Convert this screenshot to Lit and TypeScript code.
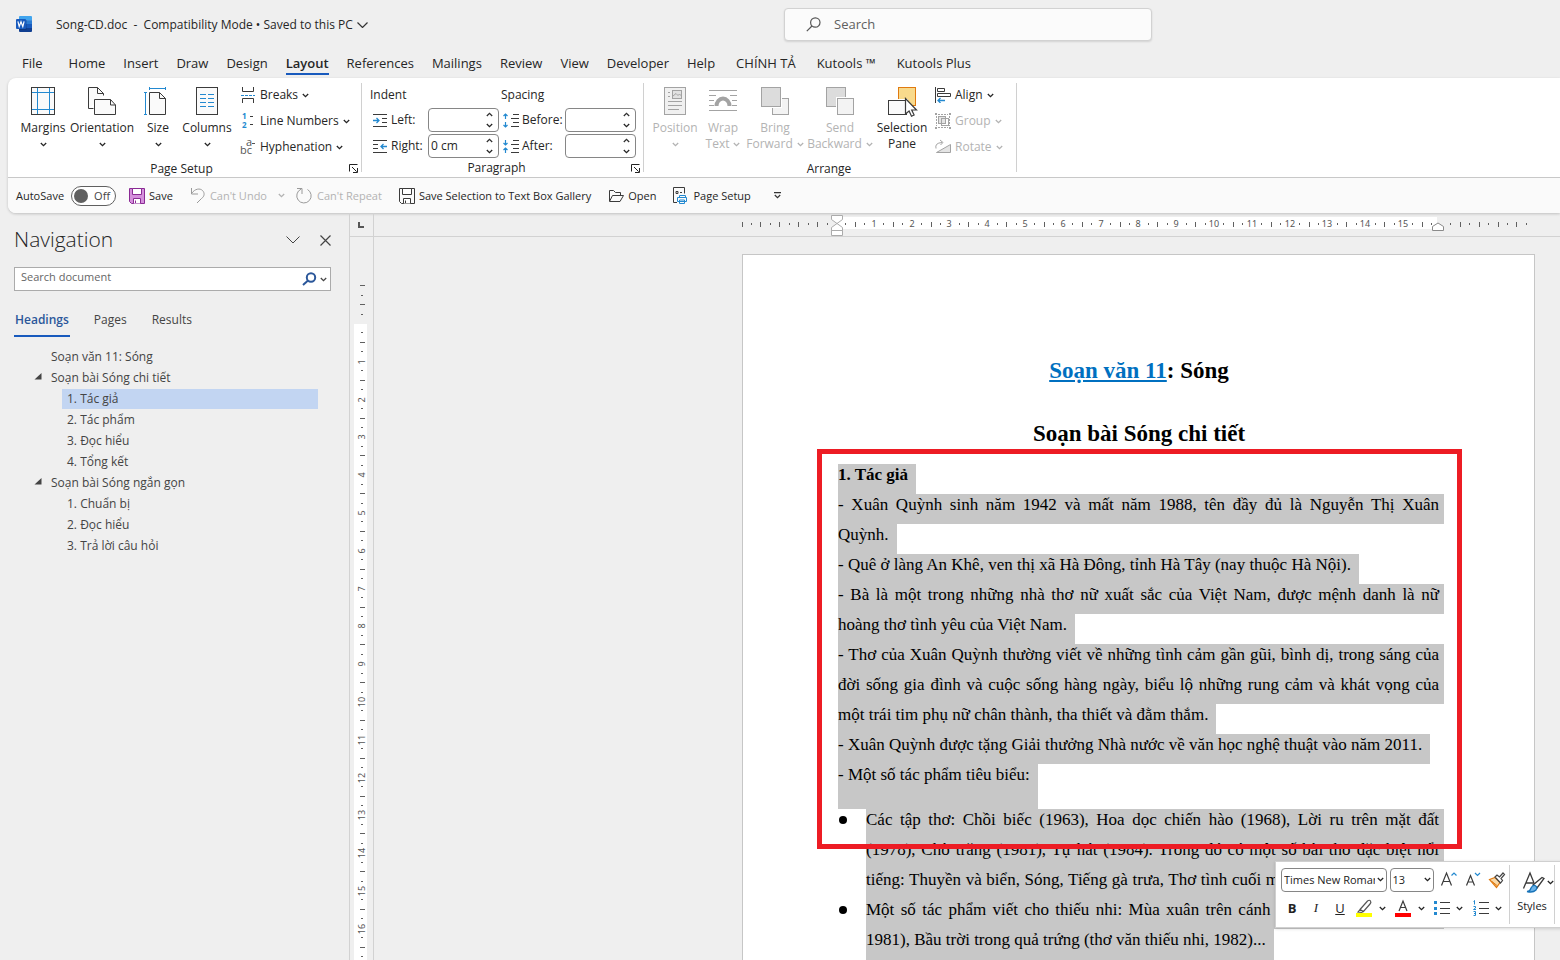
import { LitElement, html, svg, css, nothing } from "lit";
import { customElement, property } from "lit/decorators.js";
import { classMap } from "lit/directives/class-map.js";

const INK = "#3b3b3b";
const BLUE = "#2389d0";
const DIM = "#a3a3a3";

/* ---------- icon drawings ---------- */

const chevron = (cls = "") => html`<svg class="chev ${cls}" width="7" height="5" viewBox="0 0 7 5" fill="none" stroke="currentColor" stroke-width="1.3" aria-hidden="true"><path d="M.8 1l2.7 2.6L6.2 1" /></svg>`;
const chevronUp = html`<svg width="7" height="5" viewBox="0 0 7 5" fill="none" stroke="#333" stroke-width="1.3" aria-hidden="true"><path d="M.8 4l2.7-2.6L6.2 4" /></svg>`;

const launcher = html`<svg width="9" height="9" viewBox="0 0 9 9" fill="none" stroke="#222" aria-hidden="true"><path d="M.5 7.5V.5h8M3 3l4.6 4.6M8.500 4v4.500H4" /></svg>`;

const wordLogo = html`<svg width="16" height="16" viewBox="0 0 16 16" role="img" aria-label="Word">
  <path d="M3 1a1 1 0 0 1 1-1h11a1 1 0 0 1 1 1v3.500H3z" fill="#41a5ee" />
  <path d="M3 4.200h13V8H3z" fill="#2b7cd3" />
  <path d="M3 8h13v4H3z" fill="#185abd" />
  <path d="M3 12h13v3a1 1 0 0 1-1 1H4a1 1 0 0 1-1-1z" fill="#103f91" />
  <path d="M3 4h7.500v10H3z" fill="#0b2f6e" opacity=".5" />
  <rect x="0" y="3" width="10" height="10" rx="1" fill="#185abd" />
  <path d="M1.900 5.400l1.300 5.200L5 5.800l1.800 4.800 1.300-5.200" fill="none" stroke="#fff" stroke-width="1.200" />
</svg>`;

const page = (body: unknown, w = 32, h = 32) => html`<svg width=${w} height=${h} viewBox="0 0 ${w} ${h}" fill="none" stroke=${INK} aria-hidden="true">${body}</svg>`;

const bigIcons: Record<string, unknown> = {
  margins: page(svg`<rect x="4.500" y="2.500" width="23" height="27" fill="#fafafa"/><path stroke=${BLUE} d="M10.500 3v26M22.500 3v26M5 7.500h22M5 24.500h22"/>`),
  orientation: page(svg`<path fill="#fafafa" d="M2.500 23.500v-21h9l6 6v2"/><path d="M11.500 2.500v6h6M2.500 23.500h5"/><path fill="#fafafa" d="M8.500 14.500h16l5 5.500v9.500h-21z"/><path d="M24.500 14.500V20h5"/>`),
  size: page(svg`<path fill="#fafafa" d="M7.500 7.500h10l6 6v16h-16z"/><path d="M17.500 7.500v6h6"/><path stroke=${BLUE} d="M7.500 3.500h16M7.500 2v3M23.500 2v3M3.500 7.500v22M2 7.500h3M2 29.500h3"/>`),
  columns: page(svg`<rect x="5.500" y="2.500" width="21" height="27" fill="#fafafa"/><path stroke=${BLUE} d="M9 9.500h6M17 9.500h6M9 13.500h6M17 13.500h6M9 17.500h6M17 17.500h6M9 21.500h6M17 21.500h6"/>`),
  position: page(svg`<g stroke=${DIM}><rect x="5.500" y="2.500" width="21" height="27" fill="#f0f0f0"/><rect x="13.500" y="5.500" width="9" height="8" fill="#e2e2e2"/><path d="M14 11l3-2.500 2 2 1.500-1.500 2 2M9 7.500h2M9 11.500h2M9 16.500h14M9 20.500h14M9 24.500h11"/></g>`),
  wrap: page(svg`<g stroke=${DIM}><path d="M2 5.500h28M2 10.500h7M23 10.500h7M2 15.500h5M25 15.500h5M2 20.500h5M25 20.500h5M2 25.500h28"/><path stroke-width="4" d="M9.500 21a6.500 7.500 0 0 1 13 0"/></g>`),
  forward: page(svg`<g stroke=${DIM}><rect x="13.500" y="13.500" width="16" height="16" fill="#f3f3f3"/><rect x="2.500" y="2.500" width="20" height="20" fill="#fff" stroke="#fff"/><rect x="2.500" y="2.500" width="19" height="19" fill="#dcdcdc" /></g>`),
  backward: page(svg`<g stroke=${DIM}><rect x="2.500" y="2.500" width="19" height="19" fill="#dcdcdc"/><rect x="12.500" y="12.500" width="18" height="18" fill="#f3f3f3" stroke="#fff"/><rect x="13.500" y="13.500" width="16" height="16" fill="#f3f3f3"/></g>`),
  selection: page(svg`<rect x="12.500" y="2.500" width="17" height="18" fill="#f8da8c" stroke="#e07a10"/><rect x="1.500" y="14.500" width="20" height="16" fill="#fff" stroke="#fff"/><rect x="2.500" y="15.500" width="18" height="14" fill="#fafafa"/><path fill="#fff" stroke-width="1.200" d="M19.500 13.500V29l3.600-3 2.400 5.200 2.600-1.200-2.400-5h4.800z"/>`),
};

const smallIcons: Record<string, unknown> = {
  breaks: page(svg`<path d="M2.500 0v4.500h11V0M2.500 16v-4.500h11V16"/><path stroke=${BLUE} stroke-dasharray="3 1" d="M1 8.500h14"/>`, 16, 16),
  lines: html`<svg class="letters" width="16" height="16" viewBox="0 0 16 16" stroke=${INK} aria-hidden="true"><path d="M10 3.500h3M10 11.500h3"/><g fill=${BLUE} stroke="none" font-size="8" font-weight="700"><text x="2" y="6">1</text><text x="2" y="15">2</text></g></svg>`,
  hyphen: html`<svg class="letters" width="16" height="16" viewBox="0 0 16 16" fill="#555" aria-hidden="true"><g font-size="11"><text x="6" y="7">a</text><text x="0" y="15">bc</text></g><path stroke="#555" d="M12 4.500h3"/></svg>`,
  left: page(svg`<path d="M1 2.500h14M10 6.500h5M10 10.500h5M1 14.500h14"/><path stroke=${BLUE} stroke-width="1.300" d="M1 8.500h6M4.500 6l2.500 2.500L4.500 11"/>`, 16, 16),
  right: page(svg`<path d="M1 2.500h14M1 6.500h5M1 10.500h5M1 14.500h14"/><path stroke=${BLUE} stroke-width="1.300" d="M9 8.500h6M11.500 6L9 8.500l2.500 2.500"/>`, 16, 16),
  before: page(svg`<path d="M10 2.500h6M8 6.500h8M10 10.500h6M8 14.500h8"/><path stroke=${BLUE} stroke-width="1.200" d="M2.500 7V2M.5 4l2-2 2 2M2.500 10v5M.5 13l2 2 2-2"/>`, 16, 16),
  after: page(svg`<path d="M10 2.500h6M8 6.500h8M10 10.500h6M8 14.500h8"/><path stroke=${BLUE} stroke-width="1.200" d="M2.500 2v5M.5 5l2 2 2-2M2.500 15v-5M.5 12l2-2 2 2"/>`, 16, 16),
  align: page(svg`<path d="M.5 0v16M2.500 1.500h7v3h-7zM2.500 6.500h13v3h-13z"/><path stroke=${BLUE} stroke-width="1.300" d="M3 13.500h7M5.500 11L3 13.500 5.500 16"/>`, 16, 16),
  group: page(svg`<g stroke=${DIM}><path d="M3 1.500h10M3 14.500h10M1.500 3v10M14.500 3v10" stroke-dasharray="2 1"/><rect x="3.500" y="3.500" width="7" height="7" fill="#e4e4e4"/><rect x="6.500" y="5.500" width="7" height="7"/><path fill=${DIM} stroke="none" d="M0 0h2v2H0zM14 0h2v2h-2zM0 14h2v2H0zM14 14h2v2h-2z"/></g>`, 16, 16),
  rotate: page(svg`<g stroke=${DIM}><path fill="#e4e4e4" d="M1.500 13.500h14v-8z"/><path d="M1 9.500Q-.5 4 7 3.500M5 1l3 2.500L5.500 6"/></g>`, 16, 16),
  undo: page(svg`<path stroke="#9a9a9a" d="M1.500 1v6H8M1.500 6.500C5 1.500 10 1 12.500 3.500s2 6-1 8L7 16"/>`, 16, 17),
  repeat: page(svg`<path stroke="#9a9a9a" d="M5 2.200a7.200 7.200 0 1 0 6.500.3M1 1.500h5V7"/>`, 17, 17),
  open: page(svg`<path d="M1.500 13V2.500h4l2 2h5v3M1.500 13.500l3-6h11l-3.500 6z"/>`, 16, 16),
  pagesetup: page(svg`<path d="M4 15.500H.5V.5h11v6M3 4.500h2v2H3zM7 5.500h2"/><path stroke=${BLUE} fill="#fafafa" d="M6.500 8.500h6v2h-6zM4.500 10.500h9v4h-9zM6.500 13h5v3.500h-5z"/>`, 16, 18),
};

const disk = (line: string, fill: string) => page(svg`<g stroke=${line}><path fill=${fill} d="M.5.5h15v15h-13l-2-2z"/><path fill="#fff" d="M3.500.5h9v6h-9zM4.500 15.500v-5h7v5"/><path d="M6.500 15v-2.500"/></g>`, 16, 16);

/* ---------- rulers ---------- */

const CM = 37.8;
const TICK = "#606060";

function hRuler() {
  const zero = 94;
  const out = [];
  for (let q = -10; q <= 73; q++) {
    if (q === 0 || q === 64) continue;
    const x = Math.round(zero + (q * CM) / 4);
    if (q > 0 && q < 64 && q % 4 === 0) out.push(svg`<text x=${x} y="14" text-anchor="middle">${q / 4}</text>`);
    else if (q % 2 === 0) out.push(svg`<rect x=${x} y="9" width="1" height="5" fill=${TICK}/>`);
    else out.push(svg`<rect x=${x} y="10" width="1" height="2" fill=${TICK}/>`);
  }
  return html`<svg class="ruler" width="793" height="23" viewBox="0 0 793 23" role="img" aria-label="Horizontal ruler">
    <rect x="95" y="4" width="600" height="12" fill="#fff" />${out}
    <g fill="#fff" stroke="#ababab"><path d="M89.500 2.500h11v4l-5.500 4-5.500-4zM89.500 17.500v-3l5.500-4 5.500 4v3zM89.500 17.500h11v5h-11z"/></g>
    <path d="M690.500 17.500v-4l5.500-3.500 5.500 3.500v4z" fill="#fff" stroke="#8a8a8a"/>
  </svg>`;
}

function vRuler() {
  const zero = 87;
  const out = [];
  for (let q = -4; q <= 67; q++) {
    if (q === 0) continue;
    const y = Math.round(zero + (q * CM) / 4);
    if (q > 0 && q % 4 === 0) out.push(svg`<text transform="translate(15 ${y}) rotate(-90)" text-anchor="middle">${q / 4}</text>`);
    else if (q % 2 === 0) out.push(svg`<rect x="10" y=${y - 1} width="5" height="1" fill=${TICK}/>`);
    else out.push(svg`<rect x="11" y=${y - 1} width="2" height="1" fill=${TICK}/>`);
  }
  return html`<svg class="ruler" width="23" height="740" viewBox="0 0 23 740" role="img" aria-label="Vertical ruler">
    <rect x="4" y="87" width="13" height="660" fill="#fff" />${out}</svg>`;
}

/* ---------- shared styles ---------- */

const base = css`
  * { box-sizing: border-box; }
  button, input, select { font: inherit; color: inherit; margin: 0; }
  button { display: inline-flex; align-items: center; background: none; border: 0; padding: 0; text-align: left; white-space: nowrap; }
  button:disabled { color: #b3b3b3; }
  svg { display: block; flex: none; }
  input { outline: none; min-width: 0; }
`;

@customElement("ribbon-button")
export class RibbonButton extends LitElement {
  @property() icon = "";
  @property() label = "";
  @property() second = "";
  @property({ type: Boolean }) disabled = false;
  @property({ type: Boolean }) plain = false;

  static styles = [base, css`
    :host { display: block; flex: none; }
    button { display: flex; flex-direction: column; width: 100%; padding-top: 7px; line-height: 16px; text-align: center; }
    .label { margin-top: 3px; }
    .more { display: flex; align-items: center; justify-content: center; gap: 4px; height: 16px; }
  `];

  render() {
    return html`<button type="button" ?disabled=${this.disabled}>
      ${bigIcons[this.icon]}
      <span class="label">${this.label}</span>
      <span class="more">${this.second ? html`<span>${this.second}</span>` : nothing}${this.plain ? nothing : chevron()}</span>
    </button>`;
  }
}

@customElement("small-button")
export class SmallButton extends LitElement {
  @property() icon = "";
  @property() label = "";
  @property({ type: Boolean }) disabled = false;

  static styles = [base, css`
    :host { display: block; }
    button { display: flex; height: 26px; gap: 4px; }
    .letters { overflow: visible; }
  `];

  render() {
    return html`<button type="button" ?disabled=${this.disabled}>${smallIcons[this.icon]}<span>${this.label}</span>${chevron()}</button>`;
  }
}

@customElement("spin-field")
export class SpinField extends LitElement {
  @property() icon = "";
  @property() label = "";
  @property() value = "";

  static styles = [base, css`
    :host { display: block; }
    .row { display: flex; align-items: center; height: 26px; }
    label { display: flex; align-items: center; gap: 3px; flex: 1; white-space: nowrap; }
    .box { display: flex; flex: none; width: 71px; height: 24px; border: 1px solid #868686; border-radius: 4px; background: #fff; }
    input { flex: 1; border: 0; padding: 0 2px; background: none; }
    .spin { display: flex; flex-direction: column; justify-content: space-around; padding-right: 5px; }
    .spin button { height: 10px; }
  `];

  render() {
    return html`<div class="row">
      <label for="f">${smallIcons[this.icon]}<span>${this.label}</span></label>
      <span class="box"><input id="f" type="text" .value=${this.value} />
        <span class="spin"><button type="button" aria-label="Increase">${chevronUp}</button><button type="button" aria-label="Decrease">${chevron()}</button></span></span>
    </div>`;
  }
}

@customElement("nav-pane")
export class NavPane extends LitElement {
  private items = [
    { t: "Soạn văn 11: Sóng", level: 1 },
    { t: "Soạn bài Sóng chi tiết", level: 1, open: true },
    { t: "1. Tác giả", level: 2, on: true },
    { t: "2. Tác phẩm", level: 2 },
    { t: "3. Đọc hiểu", level: 2 },
    { t: "4. Tổng kết", level: 2 },
    { t: "Soạn bài Sóng ngắn gọn", level: 1, open: true },
    { t: "1. Chuẩn bị", level: 2 },
    { t: "2. Đọc hiểu", level: 2 },
    { t: "3. Trả lời câu hỏi", level: 2 },
  ];

  static styles = [base, css`
    :host { display: block; padding: 10px 18px 0 14px; color: #444; }
    .head { display: flex; align-items: center; height: 32px; color: #333; }
    h2 { flex: 1; margin: 0; font-size: 21px; font-weight: 300; line-height: 32px; color: #262626; }
    .head button { padding-top: 2px; }
    .head button + button { margin-left: 20px; }
    .search { display: flex; align-items: center; height: 24px; margin-top: 12px; border: 1px solid #ababab; background: #fff; }
    .search input { flex: 1; border: 0; padding: 0 6px 4px; font-size: 11px; background: none; }
    .search input::placeholder { color: #666; opacity: 1; }
    .search button { gap: 3px; padding-right: 3px; }
    .tabs { display: flex; gap: 23px; margin-top: 20px; }
    .tabs button { height: 26px; padding: 0 1px 6px; border-bottom: 2px solid transparent; }
    .tabs .on { font-weight: 600; color: #2b579a; border-color: #185abd; }
    ul { list-style: none; margin: 9px 13px 0 20px; padding: 0; }
    li { display: flex; align-items: center; height: 21px; }
    .mark { width: 17px; height: 10px; }
    a { flex: 1; color: inherit; text-decoration: none; line-height: 20px; }
    .sub a { margin-left: 11px; padding-left: 5px; }
    .on a { background: #c2d5f2; }
  `];

  render() {
    return html`
      <div class="head"><h2>Navigation</h2>
        <button type="button" aria-label="Options"><svg width="14" height="8" viewBox="0 0 14 8" fill="none" stroke="#444"><path d="M.5.5L7 7 13.500.5"/></svg></button>
        <button type="button" aria-label="Close"><svg width="11" height="11" viewBox="0 0 11 11" fill="none" stroke="#444" stroke-width="1.200"><path d="M.5.500l10 10M10.500.500l-10 10"/></svg></button>
      </div>
      <div class="search"><input type="text" aria-label="Search document" placeholder="Search document" />
        <button type="button" aria-label="Search"><svg width="15" height="14" viewBox="0 0 15 14" fill="none" stroke="#2b579a" stroke-width="2"><circle cx="9" cy="5.500" r="4.200"/><path d="M6 8.500L1 13"/></svg>${chevron()}</button>
      </div>
      <div class="tabs"><button type="button" class="on">Headings</button><button type="button">Pages</button><button type="button">Results</button></div>
      <ul>${this.items.map((i) => html`<li class=${classMap({ sub: i.level === 2, on: !!i.on })}>
        <span class="mark">${i.open ? html`<svg width="8" height="8" viewBox="0 0 8 8"><path d="M7.500 0v6.500H.5z" fill="#444"/></svg>` : nothing}</span><a href="#">${i.t}</a></li>`)}</ul>`;
  }
}

@customElement("mini-toolbar")
export class MiniToolbar extends LitElement {
  static styles = [base, css`
    :host { display: flex; height: 67px; padding: 5px 0 0 5px; background: #fff; border: 1px solid #d0d0d0; box-shadow: 0 1px 3px rgba(0,0,0,.15); font-size: 12px; color: #222; overflow: hidden; }
    .rows { display: flex; flex-direction: column; width: 228px; }
    .row { display: flex; align-items: center; height: 25px; }
    .row + .row { height: 32px; }
    .pick { display: grid; align-items: center; height: 24px; border: 1px solid #868686; border-radius: 4px; margin-right: 3px; }
    .pick > * { grid-area: 1 / 1; }
    .pick svg { justify-self: end; margin-right: 2px; pointer-events: none; }
    select { appearance: none; width: calc(100% - 11px); border: 0; padding: 0 0 0 2px; background: none; font-size: 11px; overflow: hidden; white-space: nowrap; }
    .face { width: 106px; }
    .size { width: 45px; }
    .row button { width: 24px; justify-content: center; }
    .row .wide { gap: 6px; width: 39px; justify-content: flex-start; padding-left: 3px; }
    .row .fmt { width: 24px; font-size: 13px; padding-right: 2px; }
    .b { font-weight: 700; }
    .i { font-style: italic; font-family: "Liberation Serif", serif; }
    .u { text-decoration: underline; }
    .styles { display: flex; flex-direction: column; align-items: center; width: 46px; border-left: 1px solid #d0d0d0; border-right: 1px solid #d0d0d0; margin: -2px 0 3px; padding-top: 5px; }
    .styles button { flex-direction: column; align-items: flex-end; gap: 4px; font-size: 11px; line-height: 16px; }
    .glyph { display: flex; align-items: center; gap: 1px; margin-right: -7px; }
  `];

  render() {
    return html`<div class="rows">
      <div class="row">
        <span class="pick face"><select aria-label="Font"><option>Times New Roman</option></select>${chevron()}</span>
        <span class="pick size"><select aria-label="Font size"><option>13</option></select>${chevron()}</span>
        <button type="button" aria-label="Grow font"><svg width="18" height="18" viewBox="0 0 18 18" fill="none" stroke=${INK} stroke-width="1.200"><path d="M1.500 14.500L6.500 2l5 12.500M3.300 10.500h6.400"/><path stroke=${BLUE} d="M11.500 4.500L14 2l2.500 2.500"/></svg></button>
        <button type="button" aria-label="Shrink font"><svg width="18" height="18" viewBox="0 0 18 18" fill="none" stroke=${INK} stroke-width="1.200"><path d="M2.500 14.500l4-10 4 10M4 11h5"/><path stroke=${BLUE} d="M11 2L13.500 4.500 16 2"/></svg></button>
        <button type="button" aria-label="Format painter"><svg width="18" height="18" viewBox="0 0 18 18" fill="none"><path d="M1.500 8.500L7 6.500l5 5-3.500 5z" fill="#f9d9a8" stroke="#e07a10" stroke-width="1.200"/><path d="M4 10.500l5 4" stroke="#e07a10"/><path d="M7 6l2-2 2.500 2L15 2l1.500 1.500L13 7.500l1.500 2-2 2.500z" fill="#fff" stroke="#444" stroke-width="1.200"/></svg></button>
      </div>
      <div class="row">
        <button type="button" class="fmt b">B</button><button type="button" class="fmt i">I</button><button type="button" class="fmt u">U</button>
        <button type="button" class="wide" aria-label="Highlight"><svg width="17" height="18" viewBox="0 0 17 18" fill="none" stroke="#555" stroke-width="1.200"><path d="M4 10.500L11.500 2q2-1.500 3 0t-.5 3L7.500 12.500zM4 10.500L2 13l3.500.5 2-1"/><path fill="#ff0" stroke="none" d="M0 14h16v4H0z"/></svg>${chevron()}</button>
        <button type="button" class="wide" aria-label="Font color"><svg width="17" height="18" viewBox="0 0 17 18" fill="none" stroke=${INK} stroke-width="1.200"><path d="M4 12L8 2l4 10M5.500 8.500h5"/><path fill="#f00" stroke="none" d="M0 14h16v4H0z"/></svg>${chevron()}</button>
        <button type="button" class="wide" aria-label="Bullets"><svg width="16" height="16" viewBox="0 0 16 16" stroke=${INK}><path d="M6 2.500h10M6 8.500h10M6 13.500h10"/><path fill=${BLUE} stroke="none" d="M0 1h3v3H0zM0 7h3v3H0zM0 12h3v3H0z"/></svg>${chevron()}</button>
        <button type="button" class="wide" aria-label="Numbering"><svg width="16" height="16" viewBox="0 0 16 16" stroke=${INK} fill="none"><path d="M6 2.500h10M6 8.500h10M6 13.500h10"/><path stroke=${BLUE} d="M.5 1.500l1-1v4M.5 6.500h2v1.500l-2 1.500h2.500M.5 11.500h2v4h-2M1 13.500h1.500"/></svg>${chevron()}</button>
      </div></div>
      <div class="styles"><button type="button"><span class="glyph"><svg width="24" height="24" viewBox="0 0 24 24" fill="none" stroke=${INK} stroke-width="1.300"><path d="M1.500 18.500L8 3l4 10M4 13h8"/><path fill="#fff" d="M11 15L20 7.500l2 1-7 9.500z"/><path fill="#6cb4ea" stroke="#1873b8" d="M5 21.500q3 0 4-3.500 1.500-3 4-2.500 3 1.500 1 4.500-3 3-9 1.500z"/></svg>${chevron()}</span><span>Styles</span></button></div>`;
  }
}

@customElement("app-root")
export class AppRoot extends LitElement {
  private tabs = ["File", "Home", "Insert", "Draw", "Design", "Layout", "References", "Mailings", "Review", "View", "Developer", "Help"];
  private addins = ["CHÍNH TẢ", "Kutools ™", "Kutools Plus"];

  /* kind: f = justified full line, s = short last line */
  private lines: [string, string][] = [
    ["s bold", "1. Tác giả"],
    ["f", "- Xuân Quỳnh sinh năm 1942 và mất năm 1988, tên đầy đủ là Nguyễn Thị Xuân"],
    ["s", "Quỳnh."],
    ["s", "- Quê ở làng An Khê, ven thị xã Hà Đông, tỉnh Hà Tây (nay thuộc Hà Nội)."],
    ["f", "- Bà là một trong những nhà thơ nữ xuất sắc của Việt Nam, được mệnh danh là nữ"],
    ["s", "hoàng thơ tình yêu của Việt Nam."],
    ["f", "- Thơ của Xuân Quỳnh thường viết về những tình cảm gần gũi, bình dị, trong sáng của"],
    ["f", "đời sống gia đình và cuộc sống hàng ngày, biểu lộ những rung cảm và khát vọng của"],
    ["s", "một trái tim phụ nữ chân thành, tha thiết và đằm thắm."],
    ["s", "- Xuân Quỳnh được tặng Giải thưởng Nhà nước về văn học nghệ thuật vào năm 2011."],
    ["s end", "- Một số tác phẩm tiêu biểu:"],
  ];
  private bullets: [string, string][][] = [
    [
      ["f", "Các tập thơ: Chồi biếc (1963), Hoa dọc chiến hào (1968), Lời ru trên mặt đất"],
      ["f", "(1978), Chờ trăng (1981), Tự hát (1984). Trong đó có một số bài thơ đặc biệt nổi"],
      ["f", "tiếng: Thuyền và biển, Sóng, Tiếng gà trưa, Thơ tình cuối mùa thu, Thơ vui về phái"],
    ],
    [
      ["f", "Một số tác phẩm viết cho thiếu nhi: Mùa xuân trên cánh đồng (truyện thiếu nhi,"],
      ["s end", "1981), Bầu trời trong quả trứng (thơ văn thiếu nhi, 1982)..."],
    ],
  ];

  static styles = [base, css`
    :host { display: flex; flex-direction: column; height: 100vh; overflow: hidden; background: #efefef; color: #262626; font-family: "Open Sans", "Noto Sans", sans-serif; font-size: 12px; line-height: 16px; }
    .title { display: grid; grid-template-columns: minmax(0, 784fr) 368px minmax(0, 408fr); align-items: center; height: 48px; flex: none; }
    .doc { display: flex; align-items: center; padding-left: 16px; }
    .doc button { margin-left: 24px; padding-top: 2px; gap: 4px; white-space: pre; }
    .find { display: flex; align-items: center; height: 33px; padding-left: 21px; gap: 13px; background: #fbfbfb; border: 1px solid #d2d2d2; border-radius: 4px; box-shadow: 0 1px 2px rgba(0,0,0,.12); font-size: 13px; }
    .find input { flex: 1; border: 0; padding: 0; background: none; }
    .find input::placeholder { color: #606060; opacity: 1; }
    .tabs { display: flex; height: 30px; flex: none; padding-left: 13px; font-size: 13px; }
    .tabs button { height: 27px; margin: 0 9px; padding-top: 5px; border-bottom: 2px solid transparent; }
    .tabs button:first-child { margin-right: 17px; }
    .tabs .addin { margin-left: 12px; }
    .tabs .on { font-weight: 600; border-color: #185abd; }
    .ribbon { flex: none; margin-left: 8px; border-radius: 8px 0 0 8px; background: #fff; box-shadow: 0 1px 3px rgba(0,0,0,.2); overflow: hidden; }
    .groups { display: flex; height: 100px; border-bottom: 1px solid #c8c8c8; }
    .group { display: flex; flex-direction: column; position: relative; }
    .group::after { content: ""; position: absolute; right: 0; top: 5px; bottom: 5px; width: 1px; background: #d0d0d0; }
    .tools { display: flex; flex: 1; }
    .caption { display: flex; align-items: center; height: 18px; padding-right: 3px; }
    .caption span { flex: 1; text-align: center; }
    .setup { width: 354px; padding-left: 6px; }
    .setup .caption { padding-right: 4px; }
    .para { width: 282px; }
    .para .caption { padding-right: 4px; }
    .arrange { width: 373px; }
    .stack { display: flex; flex-direction: column; padding: 4px 0 0 1px; }
    .setup .stack { padding-left: 10px; }
    .w34 { width: 34px; } .w46 { width: 46px; } .w52 { width: 52px; } .w58 { width: 58px; }
    .w60 { width: 60px; } .w62 { width: 62px; } .w64 { width: 64px; } .w70 { width: 70px; }
    .indent, .spacing { width: 135px; margin-left: 2px; padding-top: 4px; }
    .indent spin-field { padding-left: 8px; }
    .spacing spin-field { padding-left: 2px; }
    .field-head { height: 25px; line-height: 26px; }
    .indent .field-head { padding-left: 6px; }
    .qat { display: flex; align-items: center; gap: 17px; height: 35px; padding-left: 8px; background: #fafafa; font-size: 11px; }
    .qat button { gap: 4px; }
    .auto { display: flex; align-items: center; gap: 7px; margin-right: -4px; }
    .history { display: flex; align-items: center; gap: 11px; margin-right: -6px; }
    .qat .more { margin-left: 6px; }
    .switch { display: grid; align-items: center; width: 45px; height: 20px; border: 1px solid #606060; border-radius: 10px; background: #fff; }
    .switch > * { grid-area: 1 / 1; }
    .switch input { appearance: none; width: 14px; height: 14px; margin-left: 2px; border-radius: 50%; background: #606060; }
    .switch span { justify-self: end; padding-right: 5px; color: #444; }
    .main { display: grid; grid-template-columns: 349px 25px minmax(0, 1fr); flex: 1; min-height: 0; }
    .vert { display: flex; flex-direction: column; border: 1px solid #d2d2d2; border-width: 0 1px; overflow: hidden; }
    .corner { height: 24px; flex: none; padding: 9px 0 0 8px; border-bottom: 1px solid #d2d2d2; }
    .ruler text { font-size: 9px; fill: #555; font-family: "Noto Sans", sans-serif; }
    .work { position: relative; display: flex; flex-direction: column; min-width: 0; min-height: 0; overflow: hidden; }
    .horiz { display: flex; justify-content: flex-end; height: 24px; flex: none; padding-right: 25px; border-bottom: 1px solid #d2d2d2; }
    .canvas { display: flex; justify-content: flex-end; flex: 1; min-height: 0; padding: 17px 25px 0 0; }
    .sheet { position: relative; width: 793px; height: 1122px; padding: 99px 90px 0 95px; border: 1px solid #c6c6c6; background: #fff; color: #000; font: 17px/21px "Liberation Serif", serif; }
    h1 { margin: 0 4px 29px 0; font-size: 23px; line-height: 34px; font-weight: 700; text-align: center; }
    h1.second { margin-bottom: 13px; }
    h1 a { color: #0070c0; }
    .line { height: 30px; width: fit-content; padding-right: 8px; background: #c7c7c7; white-space: nowrap; }
    .line.f { width: 100%; padding-right: 5px; text-align: justify; text-align-last: justify; }
    .line.end { height: 45px; }
    .bold { font-weight: 700; }
    ul { list-style: none; margin: 0; padding: 0; }
    li { display: grid; grid-template-columns: 28px minmax(0, 1fr); }
    li::before { content: ""; width: 8px; height: 8px; margin: 7px 0 0 1px; border-radius: 50%; background: #000; }
    .frame { position: absolute; left: 74px; top: 194px; width: 645px; height: 400px; border: 5px solid #ed1c24; }
    mini-toolbar { position: absolute; right: -4px; top: 648px; width: 289px; }
  `];

  render() {
    return html`
      <header class="title">
        <div class="doc">${wordLogo}<button type="button"><span>Song-CD.doc  -  Compatibility Mode • Saved to this PC</span><svg width="11" height="6" viewBox="0 0 11 6" fill="none" stroke="#333" stroke-width="1.200"><path d="M.5.500l5 5 5-5"/></svg></button></div>
        <label class="find"><svg width="15" height="15" viewBox="0 0 15 15" fill="none" stroke="#555" stroke-width="1.200"><circle cx="9.300" cy="5.500" r="4.700"/><path d="M6 9L.8 14.200"/></svg><input type="search" aria-label="Search" placeholder="Search" /></label>
      </header>
      <nav class="tabs">${this.tabs.map((t) => html`<button type="button" class=${t === "Layout" ? "on" : ""}>${t}</button>`)}${this.addins.map((t) => html`<button type="button" class="addin">${t}</button>`)}</nav>
      <section class="ribbon">
        <div class="groups">
          <div class="group setup">
            <div class="tools">
              <ribbon-button class="w58" icon="margins" label="Margins"></ribbon-button>
              <ribbon-button class="w60" icon="orientation" label="Orientation"></ribbon-button>
              <ribbon-button class="w52" icon="size" label="Size"></ribbon-button>
              <ribbon-button class="w46" icon="columns" label="Columns"></ribbon-button>
              <div class="stack">
                <small-button icon="breaks" label="Breaks"></small-button>
                <small-button icon="lines" label="Line Numbers"></small-button>
                <small-button icon="hyphen" label="Hyphenation"></small-button>
              </div>
            </div>
            <div class="caption"><span>Page Setup</span><button type="button" aria-label="Page Setup settings">${launcher}</button></div>
          </div>
          <div class="group para">
            <div class="tools">
              <div class="indent"><div class="field-head">Indent</div>
                <spin-field icon="left" label="Left:"></spin-field><spin-field icon="right" label="Right:" value="0 cm"></spin-field></div>
              <div class="spacing"><div class="field-head">Spacing</div>
                <spin-field icon="before" label="Before:"></spin-field><spin-field icon="after" label="After:"></spin-field></div>
            </div>
            <div class="caption"><span>Paragraph</span><button type="button" aria-label="Paragraph settings">${launcher}</button></div>
          </div>
          <div class="group arrange">
            <div class="tools">
              <ribbon-button class="w62" icon="position" label="Position" disabled></ribbon-button>
              <ribbon-button class="w34" icon="wrap" label="Wrap" second="Text" disabled></ribbon-button>
              <ribbon-button class="w70" icon="forward" label="Bring" second="Forward" disabled></ribbon-button>
              <ribbon-button class="w60" icon="backward" label="Send" second="Backward" disabled></ribbon-button>
              <ribbon-button class="w64" icon="selection" label="Selection" second="Pane" plain></ribbon-button>
              <div class="stack">
                <small-button icon="align" label="Align"></small-button>
                <small-button icon="group" label="Group" disabled></small-button>
                <small-button icon="rotate" label="Rotate" disabled></small-button>
              </div>
            </div>
            <div class="caption"><span>Arrange</span></div>
          </div>
        </div>
        <div class="qat">
          <label class="auto">AutoSave<span class="switch"><input type="checkbox" /><span>Off</span></span></label>
          <button type="button">${disk("#8a2a94", "#d58fdc")}Save</button>
          <span class="history"><button type="button" disabled>${smallIcons.undo}Can't Undo</button><button type="button" disabled aria-label="Undo history">${chevron()}</button></span>
          <button type="button" disabled>${smallIcons.repeat}Can't Repeat</button>
          <button type="button">${disk(INK, "#fafafa")}Save Selection to Text Box Gallery</button>
          <button type="button">${smallIcons.open}Open</button>
          <button type="button">${smallIcons.pagesetup}Page Setup</button>
          <button type="button" class="more" aria-label="Customize"><svg width="7" height="7" viewBox="0 0 7 7" fill="none" stroke="#333" stroke-width="1.200"><path d="M0 .600h7M.8 3l2.700 2.600L6.200 3"/></svg></button>
        </div>
      </section>
      <div class="main">
        <nav-pane></nav-pane>
        <div class="vert"><div class="corner"><svg width="6" height="6" viewBox="0 0 6 6"><path d="M0 0h2v4h4v2H0z" fill="#555"/></svg></div>${vRuler()}</div>
        <div class="work">
          <div class="horiz">${hRuler()}</div>
          <div class="canvas">
            <article class="sheet">
              <h1><a href="#">Soạn văn 11</a>: Sóng</h1>
              <h1 class="second">Soạn bài Sóng chi tiết</h1>
              ${this.lines.map(([k, t]) => html`<div class="line ${k}">${t}</div>`)}
              <ul>${this.bullets.map((b) => html`<li><div>${b.map(([k, t]) => html`<div class="line ${k}">${t}</div>`)}</div></li>`)}</ul>
              <div class="frame"></div>
            </article>
          </div>
          <mini-toolbar></mini-toolbar>
        </div>
      </div>`;
  }
}
